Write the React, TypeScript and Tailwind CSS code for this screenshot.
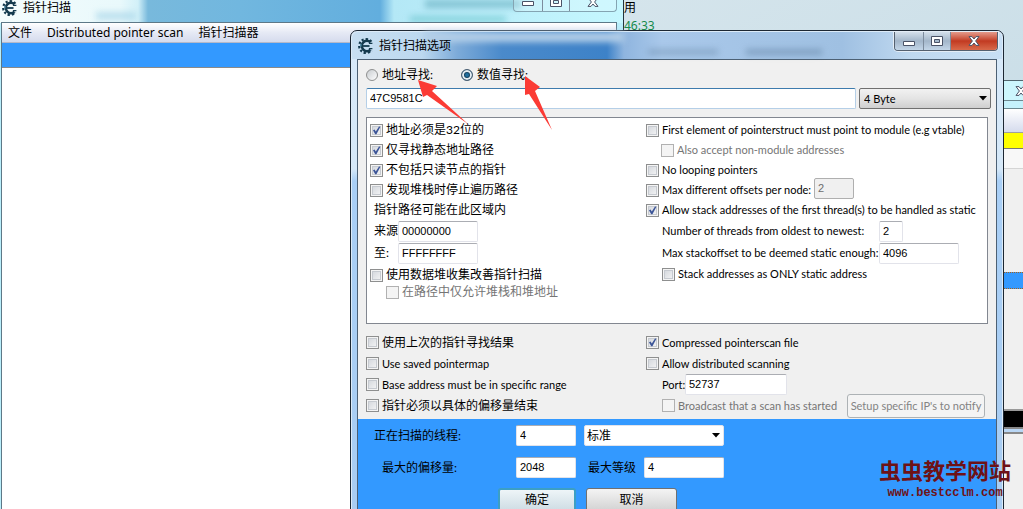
import type { ReactNode } from 'react';

interface CheckProps {
    label: string;
    checked?: boolean;
    disabled?: boolean;
    cjk?: boolean;
}

function Check({ label, checked, disabled, cjk }: CheckProps) {
    return (
        <label className={`flex items-center gap-[3px] whitespace-nowrap ${cjk ? 'text-xs' : ''} ${disabled ? 'text-[#757575]' : 'text-black'}`}>
            <span className="relative block w-[13px] h-[13px] shrink-0">
                <input
                    type="checkbox"
                    defaultChecked={checked}
                    disabled={disabled}
                    className="peer block appearance-none w-[13px] h-[13px] border border-[#8e8f8f] bg-gradient-to-br from-[#cfd3d9] to-[#f8f8f8] shadow-[inset_0_0_0_1px_#f4f4f4,inset_0_0_0_2px_#c6cad0] disabled:border-[#b1b1b1] disabled:bg-none disabled:bg-[#f4f4f4] disabled:shadow-none"
                />
                <svg className="absolute inset-0 hidden peer-checked:block pointer-events-none" width="13" height="13" viewBox="0 0 13 13">
                    <path d="M3 6.2 L4.6 5.6 L5.8 7.4 L9 2.4 L10.4 2.8 L6.4 10.2 L5.2 10.2 Z" fill="#3c5598" />
                </svg>
            </span>
            {label}
        </label>
    );
}

function Radio({ label, checked }: { label: string; checked?: boolean }) {
    return (
        <label className="flex items-center gap-1 whitespace-nowrap text-xs">
            <input
                type="radio"
                name="mode"
                defaultChecked={checked}
                className="block appearance-none w-3 h-3 rounded-full border border-[#8e8f8f] bg-gradient-to-br from-[#c8ccd0] to-white checked:border-[#4d6072] checked:bg-none checked:bg-[#1f6f9f] checked:shadow-[inset_0_0_0_2px_#e4edf3,inset_0_0_0_3px_#12405f]"
            />
            {label}
        </label>
    );
}

interface FieldProps {
    label: string;
    value: string;
    labelClass?: string;
    inputClass: string;
}

function Field({ label, value, labelClass = '', inputClass }: FieldProps) {
    return (
        <label className="flex items-center whitespace-nowrap">
            <span className={labelClass}>{label}</span>
            <input
                type="text"
                defaultValue={value}
                className={`h-[21px] px-[3px] pb-px bg-white border border-[#e2e3ea] border-t-[#abadb3] rounded-[2px] text-[11px] font-['Liberation_Sans',sans-serif] outline-none ${inputClass}`}
            />
        </label>
    );
}

function Dropdown({ label, value, className, selectClass }: { label: string; value: string; className: string; selectClass: string }) {
    return (
        <div className={`relative ${className}`}>
            <select aria-label={label} className={`block appearance-none w-full h-[21px] border rounded-[2px] outline-none ${selectClass}`}>
                <option>{value}</option>
            </select>
            <svg className="absolute right-1 top-2 pointer-events-none" width="8" height="5" viewBox="0 0 8 5">
                <path d="M0 0h8L4 4.5z" fill="#000" />
            </svg>
        </div>
    );
}

function GearIcon() {
    return (
        <svg className="shrink-0" width="16" height="16" viewBox="0 0 16 16" fill="none" stroke="#143a4e">
            <path d="M13.4 3.6A6.9 6.9 0 1 0 13.4 12.4" strokeWidth="2.2" strokeDasharray="2.2 1.9" />
            <path d="M12.4 4A5.2 5.2 0 1 0 12.4 12" strokeWidth="2.6" />
            <path d="M5 8h6.5" strokeWidth="1.8" />
            <path d="M11.6 2.4v3h2.8M11.6 13.6v-3h2.8" strokeWidth="1.4" />
            <path d="M3 6v2.4" stroke="#3f86a3" strokeWidth="1.2" />
        </svg>
    );
}

function CloseGlyph() {
    return (
        <svg width="12" height="10" viewBox="0 0 12 10">
            <path d="M1 .6h3L6 3l2-2.4h3L7.6 5 11 9.4H8L6 7 4 9.4H1L4.4 5z" fill="#fff" stroke="#4a5266" />
        </svg>
    );
}

function CaptionButtons({ active }: { active?: boolean }) {
    return (
        <div className={`flex self-start border border-t-0 rounded-b-[4px] overflow-hidden ${active ? 'h-[19px] mr-1 border-[#54606f] shadow-[0_0_0_1px_#e4edf6]' : 'h-5 border-[#84a4b2]'}`}>
            <button aria-label="最小化" className={`w-7 flex items-center justify-center pt-1 ${active ? 'bg-gradient-to-b from-[#d3dfea] via-[#a3b6ca] to-[#c3d6e8]' : 'bg-white/20'}`}>
                <svg width="12" height="5" viewBox="0 0 12 5"><path d="M.5.5h11v4H.5z" fill="#fff" stroke="#4a5266" /></svg>
            </button>
            <button aria-label="最大化" className={`w-7 flex items-center justify-center border-x border-[#7d8c9d] ${active ? 'bg-gradient-to-b from-[#d3dfea] via-[#a3b6ca] to-[#c3d6e8]' : 'bg-white/20'}`}>
                <svg width="12" height="10" viewBox="0 0 12 10"><path d="M.5.5h11v9H.5z M3.5 3.5v3h5v-3z" fill="#fff" fillRule="evenodd" stroke="#4a5266" /></svg>
            </button>
            <button aria-label="关闭" className={`w-[46px] flex items-center justify-center ${active ? 'bg-gradient-to-b from-[#e39a8b] via-[#c23a21] to-[#d8694a]' : 'bg-white/20'}`}>
                <CloseGlyph />
            </button>
        </div>
    );
}

function Row({ children, className = 'h-5' }: { children: ReactNode; className?: string }) {
    return <div className={`flex items-center ${className}`}>{children}</div>;
}

function ScannerWindow() {
    return (
        <section className="absolute left-0 right-[399px] -top-2 -bottom-2 flex flex-col pl-px pr-1.5 border-r border-[#24343c] bg-[#b9eefb]">
            <header className="absolute inset-x-0 top-0 h-[31px] bg-[linear-gradient(90deg,#f4fcfd_0,#e9f9fb_120px,#d2f0f8_138px,#78b9dc_148px,#71b7df_240px,#62aede_380px,#b4e8f6_394px,#c5f7ff_100%)]">
                <span className="absolute left-[425px] top-2 w-24 h-2 bg-[#4f9cb0]/50 blur-[3px]" />
                <span className="absolute left-[410px] top-6 w-24 h-1.5 bg-[#52b8c0]/50 blur-[3px]" />
                <span className="absolute left-24 top-5 w-10 h-2 bg-[#9fd0e6]/60 blur-[3px]" />
            </header>
            <div className="relative flex items-start justify-between h-[30px]">
                <div className="flex items-center gap-[5px] pt-2 pl-px">
                    <GearIcon />
                    <h1 className="text-xs">指针扫描</h1>
                </div>
                <CaptionButtons />
            </div>
            <div className="relative flex-1 flex flex-col border border-[#5d7887] bg-white">
                <nav className="flex items-center gap-[15px] h-5 pl-1.5 border-b border-[#b5b9c9] bg-gradient-to-b from-white via-[#e6eaf5] to-[#d5dbed] text-xs font-['Noto_Sans','Noto_Sans_CJK_SC',sans-serif]">
                    <button>文件</button>
                    <button>Distributed pointer scan</button>
                    <button>指针扫描器</button>
                </nav>
                <div className="h-[25px] bg-[#3399ff] border-b border-[#8a8a8a]" />
            </div>
        </section>
    );
}

function BackgroundWindow() {
    return (
        <aside className="absolute right-0 top-20 bottom-0 w-[22px] flex flex-col bg-[#f0f0f0]">
            <div className="h-5 flex justify-end items-center border-t border-[#53666f] bg-[#cdf6fd] overflow-hidden">
                <span className="w-2 shrink-0"><CloseGlyph /></span>
            </div>
            <div className="h-[9px] border-y border-[#6c8790] bg-[#c5f1fc]" />
            <div className="h-6 border-b border-[#a0a0a0] bg-gradient-to-b from-white to-[#d5dbed]" />
            <div className="h-4 bg-[#ffff00] border-b border-[#777777]" />
            <div className="h-5 bg-[#f8f8f8] border-b border-[#d5d5d5]" />
            <div className="h-[103px]" />
            <div className="h-[17px] border-y border-dotted border-[#a06020] bg-[#3399ff]" />
            <div className="h-[120px]" />
            <div className="h-[18px] border-t-2 border-[#999999] bg-black" />
            <div className="h-[7px] border-y-2 border-[#888888] bg-[#b9d6f4]" />
        </aside>
    );
}

function OptionsDialog() {
    return (
        <section className="absolute left-[350px] right-[19px] top-[30px] -bottom-2 flex flex-col px-1.5 border border-[#1c2733] rounded-t-[7px] shadow-[inset_0_0_0_1px_#dcebf8] bg-[linear-gradient(180deg,#d8e9f9_0,#d5e8f8_138px,#a9cff6_150px,#a9cdf2_100%)]">
            <header className="relative flex items-center justify-between h-[27px] -mx-[5px] mt-px pl-1.5 rounded-t-[6px] bg-[linear-gradient(90deg,#c8dff2_0,#bcd8ef_70px,#7dabd9_105px,#4a8acb_150px,#3d82c8_255px,#8fb5df_272px,#a9c8ea_310px,#9fc0e2_490px,#c0d9f0_560px,#c7dff4_100%)]">
                <span className="absolute left-[72px] top-0 w-[200px] h-2.5 bg-[#b4cfe8] blur-[3px]" />
                <span className="absolute left-[296px] bottom-1 w-[70px] h-1.5 bg-[#5f7f9f]/40 blur-[3px]" />
                <span className="absolute left-[394px] bottom-1 w-[76px] h-1.5 bg-[#5f7f9f]/50 blur-[3px]" />
                <div className="relative flex items-center gap-[5px]">
                    <GearIcon />
                    <h2 className="text-xs">指针扫描选项</h2>
                </div>
                <CaptionButtons active />
            </header>
            <div className="flex-1 flex flex-col border border-b-0 border-[#4c6074] bg-[#f0f0f0]">
                <div className="px-2 pb-[3px]">
                    <div className="flex gap-7 h-7 items-center pt-0.5">
                        <Radio label="地址寻找:" />
                        <Radio label="数值寻找:" checked />
                    </div>
                    <div className="flex gap-[3px] mr-[-3px]">
                        <input
                            aria-label="数值"
                            type="text"
                            defaultValue="47C9581C"
                            className="flex-1 min-w-0 h-[21px] px-[3px] pb-px bg-white border border-[#b5cfe7] border-t-[#3d7bad] rounded-[2px] text-[11px] font-['Liberation_Sans',sans-serif] outline-none"
                        />
                        <Dropdown label="类型" value="4 Byte" className="w-[132px]" selectClass="px-1 border-[#707070] bg-gradient-to-b from-[#f2f2f2] via-[#e4e4e4] to-[#cfcfcf]" />
                    </div>

                    <div className="grid grid-cols-[276px_1fr] mt-2 pt-0.5 px-[3px] pb-[25px] border border-[#828790] bg-white">
                        <div>
                            <Row><Check label="地址必须是32位的" cjk checked /></Row>
                            <Row><Check label="仅寻找静态地址路径" cjk checked /></Row>
                            <Row><Check label="不包括只读节点的指针" cjk checked /></Row>
                            <Row><Check label="发现堆栈时停止遍历路径" cjk /></Row>
                            <Row className="h-5 pl-1 text-xs">指针路径可能在此区域内</Row>
                            <Row className="h-[22px] pl-1 text-xs"><Field label="来源" value="00000000" labelClass="w-6" inputClass="w-20" /></Row>
                            <Row className="h-[22px] pl-1 text-xs"><Field label="至:" value="FFFFFFFF" labelClass="w-6" inputClass="w-20" /></Row>
                            <Row className="h-[22px]"><Check label="使用数据堆收集改善指针扫描" cjk /></Row>
                            <Row className="h-3 pl-4"><Check label="在路径中仅允许堆栈和堆地址" cjk disabled /></Row>
                        </div>
                        <div>
                            <Row><Check label="First element of pointerstruct must point to module (e.g vtable)" /></Row>
                            <Row className="h-5 pl-[15px]"><Check label="Also accept non-module addresses" disabled /></Row>
                            <Row><Check label="No looping pointers" /></Row>
                            <Row className="h-5 gap-2">
                                <span className="w-40"><Check label="Max different offsets per node:" /></span>
                                <input aria-label="Max different offsets" type="text" disabled defaultValue="2" className="w-10 h-[21px] -mt-1 px-[3px] border border-[#afafaf] rounded-[2px] bg-[#f0f0f0] text-[11px] font-['Liberation_Sans',sans-serif] text-[#6d6d6d]" />
                            </Row>
                            <Row><Check label="Allow stack addresses of the first thread(s) to be handled as static" checked /></Row>
                            <Row className="h-[22px] pl-4"><Field label="Number of threads from oldest to newest:" value="2" labelClass="w-[217px]" inputClass="w-6" /></Row>
                            <Row className="h-[22px] pl-4"><Field label="Max stackoffset to be deemed static enough:" value="4096" labelClass="w-[217px]" inputClass="w-20" /></Row>
                            <Row className="h-5 pl-4"><Check label="Stack addresses as ONLY static address" /></Row>
                        </div>
                    </div>

                    <div className="grid grid-cols-[280px_1fr] mt-2">
                        <div>
                            <Row className="h-[21px]"><Check label="使用上次的指针寻找结果" cjk /></Row>
                            <Row className="h-[21px]"><Check label="Use saved pointermap" /></Row>
                            <Row className="h-[21px]"><Check label="Base address must be in specific range" /></Row>
                            <Row className="h-[21px]"><Check label="指针必须以具体的偏移量结束" cjk /></Row>
                        </div>
                        <div>
                            <Row className="h-[21px]"><Check label="Compressed pointerscan file" checked /></Row>
                            <Row className="h-[21px]"><Check label="Allow distributed scanning" /></Row>
                            <Row className="h-[21px] pl-4"><Field label="Port:" value="52737" labelClass="w-[23px]" inputClass="w-[102px]" /></Row>
                            <Row className="h-[21px] pl-4 justify-between">
                                <Check label="Broadcast that a scan has started" disabled />
                                <button disabled className="w-[138px] h-6 mr-[3px] shrink-0 whitespace-nowrap border border-[#adb2b5] rounded-[3px] bg-[#f4f4f4] text-[#838383]">
                                    Setup specific IP's to notify
                                </button>
                            </Row>
                        </div>
                    </div>
                </div>

                <div className="flex-1 pl-4 pt-1.5 bg-[#3399ff] text-xs">
                    <div className="flex items-center h-[21px] gap-2">
                        <Field label="正在扫描的线程:" value="4" labelClass="w-[142px]" inputClass="w-[60px]" />
                        <Dropdown label="优先级" value="标准" className="w-[140px]" selectClass="px-0.5 border-[#e2e3ea] bg-white text-xs" />
                    </div>
                    <div className="flex items-center h-[21px] mt-[11px] gap-3">
                        <Field label="最大的偏移量:" value="2048" labelClass="w-[142px] pl-2" inputClass="w-[60px]" />
                        <Field label="最大等级" value="4" labelClass="w-14" inputClass="w-20" />
                    </div>
                    <div className="flex mt-2.5 gap-2.5 pl-[124px]">
                        <button className="w-[78px] h-6 border-2 border-[#3c9fc4] rounded-[3px] bg-gradient-to-b from-[#eef5f8] to-[#cfdde4]">确定</button>
                        <button className="w-[91px] h-6 border border-[#707070] rounded-[3px] bg-gradient-to-b from-[#f4f4f4] to-[#d2d2d2]">取消</button>
                    </div>
                </div>
            </div>
        </section>
    );
}

export default function App() {
    return (
        <main className="relative h-screen overflow-hidden bg-gradient-to-br from-[#dfebf0] to-[#bdd6e2] text-black text-[11px] leading-[14px] font-['Lato','Noto_Sans_CJK_SC',sans-serif]">
            <div className="absolute left-[624px] top-0 text-xs leading-4">
                <p>用</p>
                <p className="mt-0.5 text-[#168a4c] font-['Noto_Sans',sans-serif]">46:33</p>
            </div>
            <ScannerWindow />
            <BackgroundWindow />
            <OptionsDialog />

            <svg className="absolute left-[410px] top-[70px] pointer-events-none" width="150" height="64" viewBox="410 70 150 64" fill="#fb3b35">
                <path d="M418 80L437 86L432 91L468 124L427 95L423 97Z" />
                <path d="M525 76L540 87L535 91L552 130L529 94L525 95Z" />
            </svg>

            <div className="absolute right-3 bottom-2 text-center text-[#6e1216] font-bold">
                <p className="text-[22px] leading-[28px]">虫虫教学网站</p>
                <p className="text-xs leading-4 font-['Liberation_Mono',monospace]">www.bestcclm.com</p>
            </div>
        </main>
    );
}
